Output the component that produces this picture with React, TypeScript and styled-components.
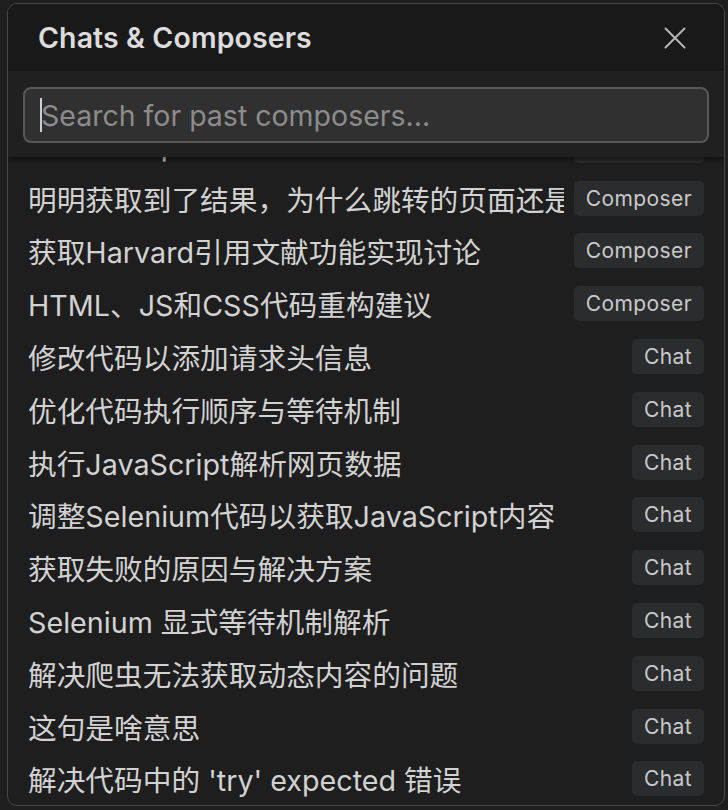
import React, { useLayoutEffect, useRef } from "react";
import styled, { createGlobalStyle } from "styled-components";

const Global = createGlobalStyle`
  html, body { margin: 0; padding: 0; background: #1e1e1e; }
  body {
    font-family: Inter, "Noto Sans CJK SC", "Noto Sans", sans-serif;
    -webkit-font-smoothing: antialiased;
  }
  #root { height: 810px; }
`;

const Page = styled.div`
  box-sizing: border-box;
  height: 810px;
  padding: 3px 3px 4px 7px;
  display: flex;
`;

const Dialog = styled.div`
  flex: 1;
  display: flex;
  flex-direction: column;
  border: 1px solid #474747;
  border-radius: 10px;
  overflow: hidden;
  background: #1e1e1e;
`;

const Header = styled.div`
  height: 67px;
  flex: none;
  display: flex;
  align-items: center;
  justify-content: space-between;
  padding: 0 38px 0 30px;
  background: #191919;
`;

const Title = styled.h1`
  margin: 0;
  font-size: 28.5px;
  font-weight: 600;
  color: #dcdcdc;
  letter-spacing: 0.1px;
`;

const CloseButton = styled.button`
  border: 0;
  background: none;
  padding: 0;
  width: 22px;
  height: 22px;
  display: flex;
  align-items: center;
  justify-content: center;
  cursor: pointer;
`;

const SearchBar = styled.div`
  flex: none;
  position: relative;
  z-index: 1;
  padding: 16px 15px 14px 15px;
  background: #202020;
  box-shadow: 0 3px 5px rgba(0, 0, 0, 0.45);
`;

const InputBox = styled.div`
  box-sizing: border-box;
  height: 56px;
  display: flex;
  align-items: center;
  padding-left: 15px;
  border: 2px solid #575757;
  border-radius: 8px;
  background: #303030;
`;

const Caret = styled.span`
  width: 2px;
  height: 34px;
  background: #cfcfcf;
  flex: none;
`;

const Input = styled.input`
  flex: 1;
  border: 0;
  outline: none;
  background: transparent;
  padding: 0;
  margin-left: -1px;
  font-family: inherit;
  font-size: 28.5px;
  color: #ddd;
  caret-color: transparent;
  &::placeholder { color: #8c8c8c; }
`;

const List = styled.div`
  flex: 1;
  min-height: 0;
  overflow-y: auto;
  scrollbar-width: none;
  &::-webkit-scrollbar { display: none; }
`;

const Row = styled.div`
  height: 52.8px;
  display: flex;
  align-items: center;
  gap: 10px;
  padding: 0 20px 0 20px;
`;

const RowTitle = styled.span`
  flex: 1;
  min-width: 0;
  overflow: hidden;
  white-space: nowrap;
  font-size: 28.7px;
  color: #d2d2d2;
`;

const Badge = styled.span`
  flex: none;
  height: 35px;
  display: flex;
  align-items: center;
  padding: 0 12px;
  border-radius: 5px;
  background: #2b2c2e;
  color: #c9c9c9;
  font-size: 21px;
  letter-spacing: 0.4px;
`;

type Item = { title: string; kind: "Composer" | "Chat" };

const items: Item[] = [
  { title: "New Composer", kind: "Composer" },
  { title: "明明获取到了结果，为什么跳转的页面还是没有变化", kind: "Composer" },
  { title: "获取Harvard引用文献功能实现讨论", kind: "Composer" },
  { title: "HTML、JS和CSS代码重构建议", kind: "Composer" },
  { title: "修改代码以添加请求头信息", kind: "Chat" },
  { title: "优化代码执行顺序与等待机制", kind: "Chat" },
  { title: "执行JavaScript解析网页数据", kind: "Chat" },
  { title: "调整Selenium代码以获取JavaScript内容", kind: "Chat" },
  { title: "获取失败的原因与解决方案", kind: "Chat" },
  { title: "Selenium 显式等待机制解析", kind: "Chat" },
  { title: "解决爬虫无法获取动态内容的问题", kind: "Chat" },
  { title: "这句是啥意思", kind: "Chat" },
  { title: "解决代码中的 'try' expected 错误", kind: "Chat" },
];

export default function App() {
  const listRef = useRef<HTMLDivElement>(null);
  useLayoutEffect(() => {
    if (listRef.current) listRef.current.scrollTop = listRef.current.scrollHeight;
  }, []);

  return (
    <>
      <Global />
      <Page>
        <Dialog>
          <Header>
            <Title>Chats &amp; Composers</Title>
            <CloseButton aria-label="Close">
              <svg width="22" height="22" viewBox="0 0 22 22">
                <path d="M1.5 1.5 L20.5 20.5 M20.5 1.5 L1.5 20.5" stroke="#b5b5b5" strokeWidth="2" strokeLinecap="round" />
              </svg>
            </CloseButton>
          </Header>
          <SearchBar>
            <InputBox>
              <Caret />
              <Input placeholder="Search for past composers..." />
            </InputBox>
          </SearchBar>
          <List ref={listRef}>
            {items.map((it, i) => (
              <Row key={i}>
                <RowTitle>{it.title}</RowTitle>
                <Badge>{it.kind}</Badge>
              </Row>
            ))}
          </List>
        </Dialog>
      </Page>
    </>
  );
}
